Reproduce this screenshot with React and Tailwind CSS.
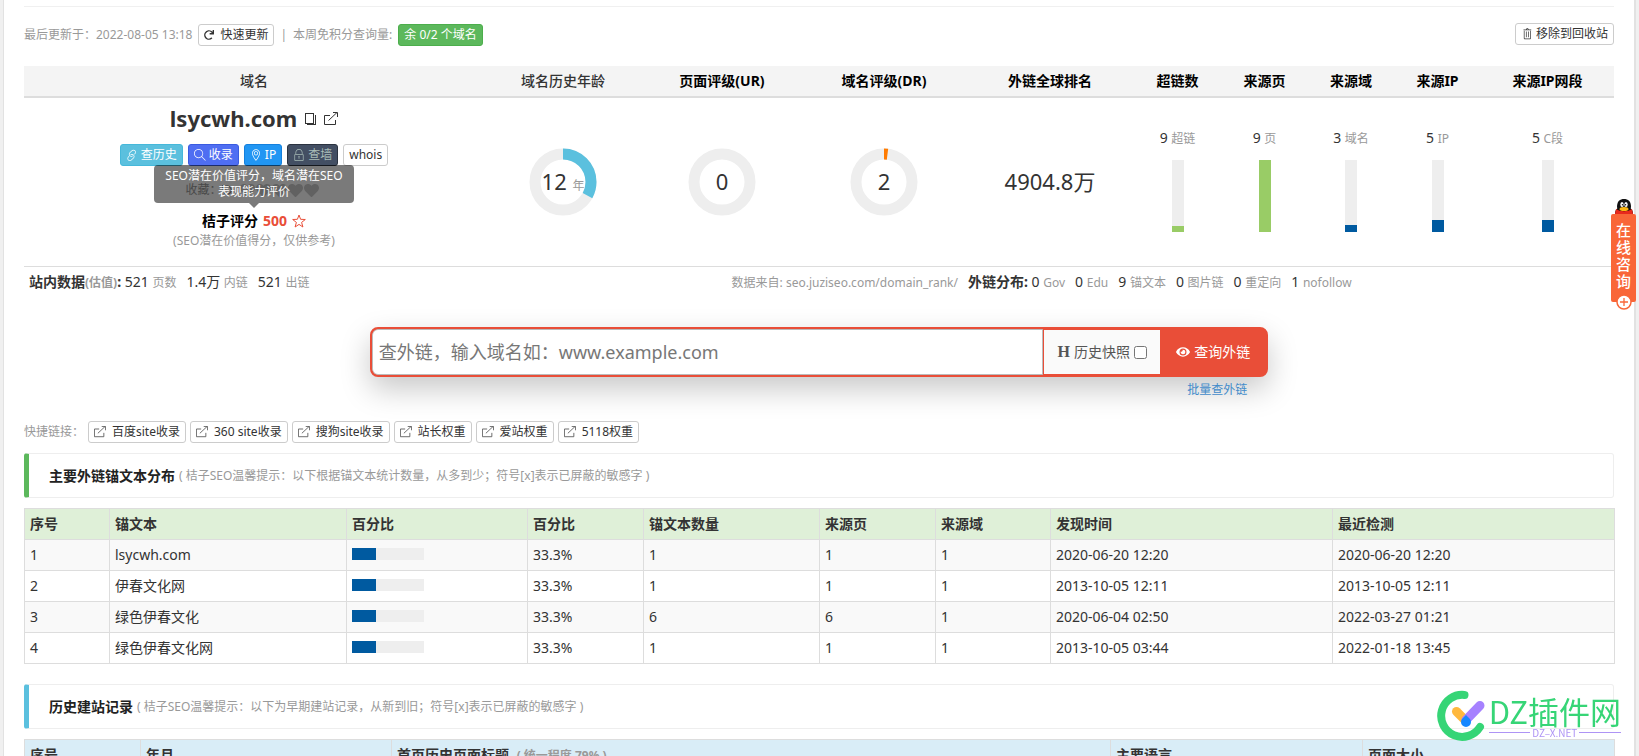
import { TfiLink, TfiSearch, TfiLocationPin, TfiLock, TfiTrash } from "react-icons/tfi";
import { FaHeart, FaRedo, FaEye } from "react-icons/fa";

const btn = "inline-flex h-[22px] items-center whitespace-nowrap rounded-[3px] border px-[5px] text-xs";
const plain = "border-[#ccc] bg-white text-[#333]";

function CopyIcon() {
  return (
    <svg className="h-3 w-[11px]" viewBox="0 0 11 12" fill="none" stroke="#333" shapeRendering="crispEdges" aria-hidden="true">
      <path d="M.5.5h8v10h-8z" />
      <path d="M10.500 1.500v10H2" />
    </svg>
  );
}

function OpenIcon({ className }) {
  return (
    <svg className={className} viewBox="0 0 14 14" fill="none" stroke="currentColor" aria-hidden="true">
      <path d="M6 3.500H.5v9h11V8M4.500 8.500l8.500-8M9 .5h4.500V5" />
    </svg>
  );
}

function StarIcon() {
  return (
    <svg className="size-[14px]" viewBox="0 0 14 14" fill="none" stroke="#e94e38" aria-hidden="true">
      <path d="M7 1l1.600 4.300 4.700.2-3.700 2.900 1.300 4.600L7 10.400 3.100 13l1.300-4.600L.7 5.500l4.700-.2z" />
    </svg>
  );
}

function Ring({ percent, color, children }) {
  const length = 2 * Math.PI * 28;
  return (
    <div className="relative mx-auto size-[68px]">
      <svg className="size-full -rotate-90" viewBox="0 0 68 68" fill="none" strokeWidth="11" aria-hidden="true">
        <circle cx="34" cy="34" r="28" stroke="#eee" />
        {percent > 0 && (
          <circle cx="34" cy="34" r="28" stroke={color} strokeDasharray={`${(length * percent) / 100} ${length}`} />
        )}
      </svg>
      <div className="absolute inset-0 flex items-center justify-center text-[22px]">
        <span>{children}</span>
      </div>
    </div>
  );
}

function Meter({ value, unit, percent, fill }) {
  return (
    <div className="flex flex-col items-center pb-1">
      <div className="mb-3 h-5 text-sm leading-5">
        {value} <span className="text-xs text-[#999]">{unit}</span>
      </div>
      <div className="flex h-[72px] w-3 items-end bg-[#eee]">
        <div className={`w-full ${fill}`} style={{ height: `${percent}%` }} />
      </div>
    </div>
  );
}

function Stat({ value, unit }) {
  return (
    <span className="whitespace-nowrap">
      {value} <span className="text-xs text-[#999]">{unit}</span>
    </span>
  );
}

function SectionTitle({ title, note, edge }) {
  return (
    <div className={`flex h-[45px] items-center gap-1 rounded-[3px] border border-l-[5px] border-[#eee] pl-5 ${edge}`}>
      <h2 className="text-sm font-bold text-[#222]">{title}</h2>
      <span className="text-xs text-[#999]">{note}</span>
    </div>
  );
}

const meters = [
  { value: 9, unit: "超链", percent: 9, fill: "bg-[#99cc66]" },
  { value: 9, unit: "页", percent: 100, fill: "bg-[#99cc66]" },
  { value: 3, unit: "域名", percent: 10, fill: "bg-[#005aa0]" },
  { value: 5, unit: "IP", percent: 17, fill: "bg-[#005aa0]" },
  { value: 5, unit: "C段", percent: 17, fill: "bg-[#005aa0]" },
];
const heads = ["页面评级(UR)", "域名评级(DR)", "外链全球排名", "超链数", "来源页", "来源域", "来源IP", "来源IP网段"];
const quick = ["百度site收录", "360 site收录", "搜狗site收录", "站长权重", "爱站权重", "5118权重"];
const anchorHeads = ["序号", "锚文本", "百分比", "百分比", "锚文本数量", "来源页", "来源域", "发现时间", "最近检测"];
const anchors = [
  ["1", "lsycwh.com", "1", "1", "1", "2020-06-20 12:20", "2020-06-20 12:20"],
  ["2", "伊春文化网", "1", "1", "1", "2013-10-05 12:11", "2013-10-05 12:11"],
  ["3", "绿色伊春文化", "6", "6", "1", "2020-06-04 02:50", "2022-03-27 01:21"],
  ["4", "绿色伊春文化网", "1", "1", "1", "2013-10-05 03:44", "2022-01-18 13:45"],
];
const cell = "h-[31px] border border-[#ddd] px-[5px] text-left";

export default function App() {
  return (
    <div className="h-screen overflow-hidden bg-[#f0f0f0] px-[3px] font-['Noto_Sans','Noto_Sans_CJK_SC',sans-serif] text-sm text-[#333]">
      <main className="min-h-full border-l border-r-2 border-[#e2e2e2] bg-white px-5 pt-[6px]">
        <hr className="border-[#f0f0f0]" />

        <div className="mt-4 flex items-start justify-between">
          <div className="flex h-[23px] items-center gap-[6px] pt-px text-xs text-[#999]">
            <span>最后更新于：2022-08-05 13:18</span>
            <button type="button" className={`${btn} ${plain} gap-[6px]`}><FaRedo className="size-[10px]" />快速更新</button>
            <span>|</span>
            <span>本周免积分查询量:</span>
            <button type="button" className={`${btn} border-[#4cae4c] bg-[#5cb85c] text-white`}>余 0/2 个域名</button>
          </div>
          <button type="button" className={`${btn} ${plain} gap-[3px]`}><TfiTrash className="size-3" />移除到回收站</button>
        </div>

        <table className="mt-5 w-full table-fixed border-collapse text-center">
          <colgroup>
            <col className="w-[460px]" /><col className="w-[158px]" /><col className="w-[160px]" /><col className="w-[164px]" />
            <col className="w-[168px]" /><col className="w-[87px]" /><col className="w-[87px]" /><col className="w-[86px]" />
            <col className="w-[87px]" /><col className="w-[133px]" />
          </colgroup>
          <thead>
            <tr className="h-[31px] border-b-2 border-[#ddd] bg-[#f4f4f4]">
              <th className="font-medium">域名</th>
              <th className="font-medium">域名历史年龄</th>
              {heads.map((h) => <th key={h} className="font-bold text-black">{h}</th>)}
            </tr>
          </thead>
          <tbody>
            <tr className="border-b border-[#ddd]">
              <td className="p-0">
                <div className="flex flex-col items-center pb-4 pt-1">
                  <div className="flex h-[34px] items-center gap-2">
                    <h1 className="text-[22px] font-bold">lsycwh.com</h1>
                    <button type="button" aria-label="复制"><CopyIcon /></button>
                    <a href="#open" aria-label="打开"><OpenIcon className="size-[14px]" /></a>
                  </div>
                  <div className="mt-2 flex gap-[5px]">
                    <a href="#history" className={`${btn} gap-[3px] border-[#46b8da] bg-[#5bc0de] text-white`}><TfiLink className="size-3" />查历史</a>
                    <a href="#index" className={`${btn} gap-[3px] border-[#3a5be0] bg-[#4f6ef2] text-white`}><TfiSearch className="size-3" />收录</a>
                    <a href="#ip" className={`${btn} gap-[3px] border-[#1480dd] bg-[#2196f3] text-white`}><TfiLocationPin className="size-3" />IP</a>
                    <a href="#wall" className={`${btn} gap-[3px] border-[#2b3340] bg-[#434f63] text-[#a9bdb8]`}><TfiLock className="size-3" />查墙</a>
                    <a href="#whois" className={`${btn} ${plain}`}>whois</a>
                  </div>
                  <div className="mt-[14px] flex h-5 items-center text-xs text-[#999]">
                    <span>收藏：</span>
                    <FaRedo className="size-[10px] -scale-x-100" />
                    <span className="flex gap-px pl-2 pr-1 text-[#ccc]">
                      {[1, 2, 3, 4, 5].map((n) => <FaHeart key={n} className="size-[15px]" />)}
                    </span>
                  </div>
                  <div className="relative mt-[10px] flex h-[22px] items-center gap-[5px] font-bold">
                    <span className="text-black">桔子评分</span>
                    <span className="text-[#e94e38]">500</span>
                    <StarIcon />
                    <div role="tooltip" className="absolute bottom-full left-1/2 mb-[2px] w-[200px] -translate-x-1/2 opacity-95">
                      <div className="rounded-[4px] bg-black/55 px-2 py-[3px] text-center text-xs font-normal leading-4 text-white">
                        SEO潜在价值评分，域名潜在SEO表现能力评价
                      </div>
                      <div className="mx-auto h-0 w-0 border-x-[5px] border-t-[5px] border-x-transparent border-t-black/55" />
                    </div>
                  </div>
                  <div className="h-[18px] text-xs leading-[18px] text-[#999]">(SEO潜在价值得分，仅供参考)</div>
                </div>
              </td>
              <td><Ring percent={33} color="#5bc0de">12 <span className="text-xs text-[#999]">年</span></Ring></td>
              <td><Ring percent={0} color="#ff7b00">0</Ring></td>
              <td><Ring percent={2} color="#ff7b00">2</Ring></td>
              <td className="text-[22px]">4904.8万</td>
              {meters.map((m) => <td key={m.unit}><Meter {...m} /></td>)}
            </tr>
          </tbody>
        </table>

        <div className="flex h-[29px] items-center">
          <div className="flex w-[44.5%] items-baseline gap-[10px] pl-[5px]">
            <span><b>站内数据<span className="text-xs text-[#999]">(估值)</span>:</b> <Stat value="521" unit="页数" /></span>
            <Stat value="1.4万" unit="内链" />
            <Stat value="521" unit="出链" />
          </div>
          <div className="flex items-baseline gap-[10px] whitespace-nowrap">
            <span className="text-xs text-[#999]">数据来自: seo.juziseo.com/domain_rank/</span>
            <span><b>外链分布:</b> <Stat value="0" unit="Gov" /></span>
            <Stat value="0" unit="Edu" />
            <Stat value="9" unit="锚文本" />
            <Stat value="0" unit="图片链" />
            <Stat value="0" unit="重定向" />
            <Stat value="1" unit="nofollow" />
          </div>
        </div>

        <form className="mx-auto mt-[31px] w-[56.5%]" onSubmit={(e) => e.preventDefault()}>
          <div className="flex h-[50px] overflow-hidden rounded-lg border-2 border-[#e94e38] bg-[#e94e38] shadow-[0_12px_30px_rgba(0,0,0,0.22)]">
            <input
              type="text"
              aria-label="域名"
              placeholder="查外链，输入域名如：www.example.com"
              className="min-w-0 flex-1 rounded-l-[6px] border border-[#bbb] bg-white px-[6px] text-lg outline-none placeholder:text-[#777]"
            />
            <label className="my-px ml-px flex w-[116px] items-center justify-center gap-1 bg-[#fafafa] text-[#555]">
              <span className="font-['Liberation_Serif',serif] text-base font-bold">H</span>
              历史快照
              <input type="checkbox" className="size-[13px]" />
            </label>
            <button type="submit" className="flex w-[106px] items-center justify-center gap-1 text-white">
              <FaEye className="size-[14px]" />查询外链
            </button>
          </div>
          <div className="flex h-[26px] items-center justify-end pr-[21px] text-xs">
            <a href="#batch" className="text-[#428bca]">批量查外链</a>
          </div>
        </form>

        <nav className="mt-[18px] flex h-[22px] items-center gap-1 text-xs">
          <span className="text-[#999]">快捷链接：</span>
          {quick.map((q) => (
            <a key={q} href="#quick" className={`${btn} ${plain} gap-[6px]`}><OpenIcon className="size-3 text-[#555]" />{q}</a>
          ))}
        </nav>

        <div className="mt-[10px]">
          <SectionTitle
            title="主要外链锚文本分布"
            note="( 桔子SEO温馨提示：以下根据锚文本统计数量，从多到少；符号[x]表示已屏蔽的敏感字 )"
            edge="border-l-[#5cb85c]"
          />
        </div>

        <table className="mt-[10px] w-full table-fixed border-collapse">
          <colgroup>
            <col className="w-[85px]" /><col className="w-[237px]" /><col className="w-[181px]" /><col className="w-[116px]" />
            <col className="w-[176px]" /><col className="w-[116px]" /><col className="w-[115px]" /><col className="w-[282px]" />
            <col className="w-[282px]" />
          </colgroup>
          <thead>
            <tr className="bg-[#dff0d8]">
              {anchorHeads.map((h, i) => <th key={i} className={`${cell} font-bold`}>{h}</th>)}
            </tr>
          </thead>
          <tbody>
            {anchors.map(([no, text, ...rest]) => (
              <tr key={no} className="odd:bg-[#f9f9f9]">
                <td className={cell}>{no}</td>
                <td className={cell}>{text}</td>
                <td className={cell}>
                  <div className="mb-[2px] h-3 w-[72px] bg-[#eee]"><div className="h-full w-1/3 bg-[#005aa0]" /></div>
                </td>
                <td className={cell}>33.3%</td>
                {rest.map((v, i) => <td key={i} className={cell}>{v}</td>)}
              </tr>
            ))}
          </tbody>
        </table>

        <div className="mt-5">
          <SectionTitle
            title="历史建站记录"
            note="( 桔子SEO温馨提示：以下为早期建站记录，从新到旧；符号[x]表示已屏蔽的敏感字 )"
            edge="border-l-[#5bc0de]"
          />
        </div>

        <table className="mt-[10px] w-full table-fixed border-collapse">
          <colgroup>
            <col className="w-[116px]" /><col className="w-[251px]" /><col className="w-[719px]" /><col className="w-[252px]" /><col className="w-[252px]" />
          </colgroup>
          <thead>
            <tr className="bg-[#d9edf7]">
              <th className={cell}>序号</th>
              <th className={cell}>年月</th>
              <th className={cell}>首页历史页面标题 <span className="pl-1 text-xs text-[#999]">( 统一程度 79% )</span></th>
              <th className={cell}>主要语言</th>
              <th className={cell}>页面大小</th>
            </tr>
          </thead>
        </table>
      </main>

      <a href="#chat" className="fixed right-[3px] top-[198px] flex w-[25px] flex-col items-center text-white">
        <svg className="h-4 w-[22px]" viewBox="0 0 22 16" aria-hidden="true">
          <path d="M2 16c0-3 1-5 3-6h12c2 1 3 3 3 6z" fill="#111" />
          <path d="M4 9C4 3 7 1 11 1s7 2 7 8l-1 4H5z" fill="#111" />
          <path d="M3 11c5 3 11 3 16 0l1 5H2z" fill="#e8291c" />
          <ellipse cx="9" cy="6.500" rx="1.700" ry="2.500" fill="#fff" />
          <ellipse cx="13" cy="6.500" rx="1.700" ry="2.500" fill="#fff" />
          <circle cx="9.500" cy="6.700" r=".8" fill="#111" />
          <circle cx="12.500" cy="6.700" r=".8" fill="#111" />
          <ellipse cx="11" cy="11" rx="4.500" ry="2" fill="#fdb813" />
        </svg>
        <span className="flex h-[88px] w-full flex-col items-center rounded-[2px] bg-[#f96638] pt-2 text-[15px] font-medium leading-[17px]">
          <span>在</span><span>线</span><span>咨</span><span>询</span>
        </span>
        <svg className="-mt-2 size-4" viewBox="0 0 16 16" aria-hidden="true">
          <circle cx="8" cy="8" r="7" fill="#fff" stroke="#f96638" strokeWidth="1.500" />
          <path d="M8 4v8M4 8h8" stroke="#f96638" strokeWidth="1.300" />
        </svg>
      </a>

      <div className="fixed bottom-[15px] right-[18px] flex items-center gap-1">
        <svg className="h-[51px] w-12" viewBox="0 0 48 51" fill="none" strokeLinecap="round" aria-hidden="true">
          <path d="M27.500 5A21 21 0 1 0 43 37" stroke="#36d576" strokeWidth="8" />
          <path d="M19.500 21.500l9 9" stroke="#ffb83d" strokeWidth="9" />
          <path d="M29 30L43 15.500" stroke="#a681ff" strokeWidth="9" />
          <path d="M29 25l3.500 3.500a5 5 0 1 1-7 0z" fill="#1687ff" />
        </svg>
        <div className="font-['Noto_Sans_CJK_SC',sans-serif]">
          <div className="text-[31px] leading-[34px] text-[#36d576]">DZ插件网</div>
          <div className="flex items-center gap-[2px] text-[10px] leading-[10px] text-[#ae94f5]">
            <span className="h-px flex-1 bg-[#ae94f5]" />DZ–X.NET<span className="h-px flex-1 bg-[#ae94f5]" />
          </div>
        </div>
      </div>
    </div>
  );
}
